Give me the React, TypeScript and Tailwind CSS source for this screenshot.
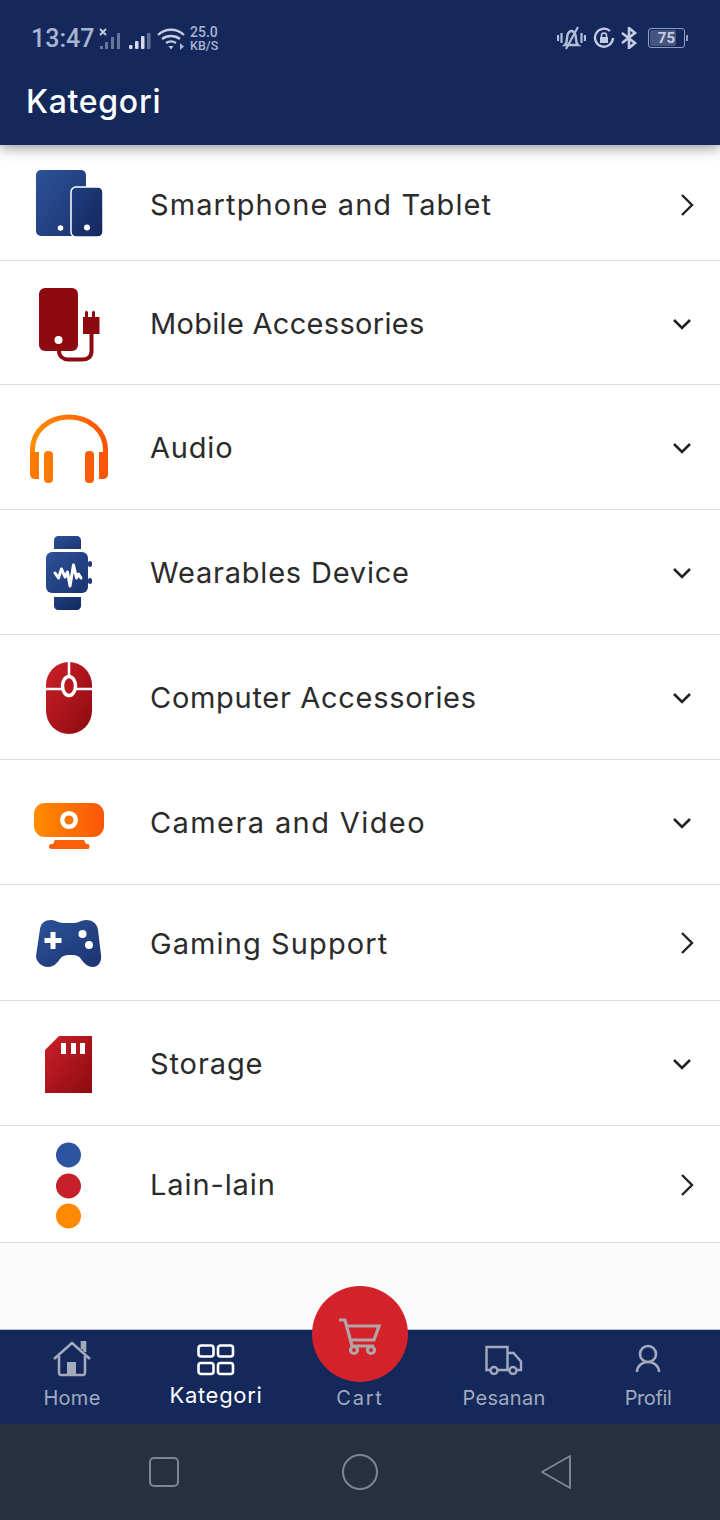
import type { ReactNode } from 'react';

const FONT = "font-['Inter','Open_Sans',sans-serif]";

type Row = {
  title: string;
  top: number;
  height: number;
  chevron: 'right' | 'down';
  tracking: string;
  icon: ReactNode;
};

const rows: Row[] = [
  {
    title: 'Smartphone and Tablet',
    top: 148,
    height: 112,
    chevron: 'right',
    tracking: 'tracking-[1.1px]',
    icon: (
      <>
        <rect x="36" y="170" width="50" height="66" rx="5" fill="url(#blue)" />
        <rect x="71" y="187" width="32" height="50" rx="5" fill="url(#blue2)" stroke="#fff" strokeWidth="1.5" />
        <circle cx="60.5" cy="228" r="2.8" fill="#fff" />
        <circle cx="87" cy="227.5" r="3" fill="#fff" />
      </>
    ),
  },
  {
    title: 'Mobile Accessories',
    top: 261,
    height: 123,
    chevron: 'down',
    tracking: 'tracking-[0.3px]',
    icon: (
      <>
        <rect x="39" y="288" width="39" height="63" rx="6" fill="#8c0a10" />
        <circle cx="58.5" cy="340" r="4" fill="#fff" />
        <path d="M59 351c0 5 4 8.500 9 8.500h14c6 0 9.500-3 9.500-8V334" fill="none" stroke="#8c0a10" strokeWidth="4" />
        <path d="M83 317h2v-5l1.500-1.500 1.500 1.500v5h4v-5l1.500-1.500 1.500 1.500v5h4.500v17H83z" fill="#8c0a10" />
      </>
    ),
  },
  {
    title: 'Audio',
    top: 385,
    height: 124,
    chevron: 'down',
    tracking: 'tracking-[0.8px]',
    icon: (
      <>
        <path d="M32.500 456v-6c0-19 16-33 36.500-33s36.500 14 36.500 33v6" fill="none" stroke="url(#orange)" strokeWidth="5" />
        <path d="M30 452h9v27h-4c-3 0-5-2-5-5z" fill="#ff7a05" />
        <rect x="44" y="451" width="9" height="32" rx="4" fill="#ff7a05" />
        <rect x="85" y="451" width="9" height="32" rx="4" fill="#fb5c08" />
        <path d="M99 452h9v22c0 3-2 5-5 5h-4z" fill="#fb5508" />
      </>
    ),
  },
  {
    title: 'Wearables Device',
    top: 510,
    height: 124,
    chevron: 'down',
    tracking: 'tracking-[0.8px]',
    icon: (
      <>
        <path d="M54 549v-9c0-2 2-4 4-4h19c2 0 4 2 4 4v9z" fill="url(#blue)" />
        <rect x="46" y="552" width="42" height="41" rx="6" fill="url(#blue)" />
        <path d="M54 597h27v9c0 2-2 4-4 4H58c-2 0-4-2-4-4z" fill="url(#blue2)" />
        <rect x="88" y="561" width="4" height="6" rx="2" fill="#1e3a78" />
        <rect x="88" y="578" width="4" height="6" rx="2" fill="#1e3a78" />
        <path d="M55 573l3.500 5 3-9 3.500 8 2.500-5 2.500 14 3.500-21 3 13 2-4 2.500 4" fill="none" stroke="#fff" strokeWidth="3" strokeLinejoin="round" strokeLinecap="round" />
      </>
    ),
  },
  {
    title: 'Computer Accessories',
    top: 635,
    height: 124,
    chevron: 'down',
    tracking: 'tracking-[0.7px]',
    icon: (
      <>
        <rect x="46" y="662" width="46" height="72" rx="23" fill="url(#red)" />
        <path d="M46 689h46M69 662v14" stroke="#fff" strokeWidth="2.500" />
        <ellipse cx="69" cy="686" rx="6.500" ry="9.500" fill="#b9151f" stroke="#fff" strokeWidth="3.500" />
      </>
    ),
  },
  {
    title: 'Camera and Video',
    top: 760,
    height: 124,
    chevron: 'down',
    tracking: 'tracking-[1.4px]',
    icon: (
      <>
        <rect x="34" y="803" width="70" height="34" rx="11" fill="url(#orange)" />
        <circle cx="69" cy="820" r="6.800" fill="#f97508" stroke="#fff" strokeWidth="4.500" />
        <path d="M55 840h29l2 4h2c1 0 1.500 1 1.500 2.500S89 849 88 849H51c-1 0-2-1-2-2.500s1-2.500 2-2.500h2z" fill="#f85f08" />
      </>
    ),
  },
  {
    title: 'Gaming Support',
    top: 885,
    height: 115,
    chevron: 'right',
    tracking: 'tracking-[1.1px]',
    icon: (
      <>
        <path d="M51 920c5 0 7 3 12 3h11c5 0 7-3 12-3 6 0 11 3 12 10l3 25c1 7-3 12-8 12-6 0-9-4-12-8-2-3-5-4-8-4H69c-4 0-7 1-9 4-3 4-6 8-12 8-6 0-12-5-12-11l4-27c1-6 5-9 11-9z" fill="url(#blue)" />
        <path d="M50.500 932h5v6h6v5h-6v6h-5v-6h-6v-5h6z" fill="#fff" />
        <circle cx="82.500" cy="934" r="4" fill="#fff" />
        <circle cx="89" cy="945" r="4" fill="#fff" />
      </>
    ),
  },
  {
    title: 'Storage',
    top: 1001,
    height: 124,
    chevron: 'down',
    tracking: 'tracking-[0.9px]',
    icon: (
      <>
        <path d="M59 1036h33v57H45v-43z" fill="url(#red)" />
        <path d="M61 1043h5v11h-5zM71 1043h5v11h-5zM80 1043h5v11h-5z" fill="#fff" />
      </>
    ),
  },
  {
    title: 'Lain-lain',
    top: 1126,
    height: 116,
    chevron: 'right',
    tracking: 'tracking-[0.9px]',
    icon: (
      <>
        <circle cx="68.500" cy="1155" r="12.500" fill="#2c549f" />
        <circle cx="68.500" cy="1186" r="12.500" fill="#c6202b" />
        <circle cx="68.500" cy="1216" r="12.500" fill="#ff8a00" />
      </>
    ),
  },
];

function Gradients() {
  return (
    <svg width="0" height="0" className="absolute">
      <defs>
        <linearGradient id="blue" x1="0" y1="0" x2="1" y2="1">
          <stop offset="0" stopColor="#2c5299" />
          <stop offset="1" stopColor="#1c3470" />
        </linearGradient>
        <linearGradient id="blue2" x1="0" y1="0" x2="1" y2="1">
          <stop offset="0" stopColor="#1f3d7f" />
          <stop offset="1" stopColor="#14285c" />
        </linearGradient>
        <linearGradient id="red" x1="0" y1="0" x2="1" y2="1">
          <stop offset="0" stopColor="#cc2029" />
          <stop offset="1" stopColor="#8c0a10" />
        </linearGradient>
        <linearGradient id="orange" x1="0" y1="0" x2="1" y2="0">
          <stop offset="0" stopColor="#ff8c00" />
          <stop offset="1" stopColor="#fb5508" />
        </linearGradient>
      </defs>
    </svg>
  );
}

function Chevron({ dir }: { dir: 'right' | 'down' }) {
  if (dir === 'right') {
    return (
      <svg width="16" height="24" viewBox="0 0 16 24" fill="none" stroke="#222" strokeWidth="2.400" className="mr-[25px] mt-[1px]">
        <path d="M3 2l10 10-10 10" />
      </svg>
    );
  }
  return (
    <svg width="20" height="14" viewBox="0 0 20 14" fill="none" stroke="#222" strokeWidth="2.600" className="mr-[28px] mt-[2px]">
      <path d="M2 3l8 8 8-8" />
    </svg>
  );
}

function StatusBar() {
  return (
    <div className="flex h-[65px] items-end justify-between pl-[31px] pr-[32px] pb-[11px] font-['Roboto',sans-serif] text-[#a9b4d0]">
      <div className="flex items-center">
        <span className="w-[61px] text-[25px] leading-[30px] font-medium">13:47</span>
        <svg width="56" height="24" viewBox="0 0 56 24" className="ml-[7px]" fill="#a9b4d0">
          <path d="M1 2l6 6M7 2L1 8" stroke="#c5cde2" strokeWidth="1.800" />
          <g opacity="0.55">
            <rect x="1" y="19" width="3" height="3" />
            <rect x="6" y="15" width="3" height="7" />
            <rect x="12" y="10" width="3" height="12" />
            <rect x="18" y="6" width="3" height="16" />
          </g>
          <rect x="30" y="18" width="3.500" height="4" rx="1" fill="#d5dbea" />
          <rect x="36" y="14" width="3.500" height="8" rx="1" fill="#d5dbea" />
          <rect x="42" y="9" width="3.500" height="13" rx="1" fill="#d5dbea" />
          <rect x="48" y="6" width="3.500" height="16" opacity="0.5" />
        </svg>
        <svg width="30" height="24" viewBox="0 0 30 24" className="ml-[2px]" fill="none" stroke="#c5cde2" strokeWidth="2.300">
          <path d="M1 8c7-7 19-7 26 0M5 12c5-4 13-4 18 0M9 16c3-2 7-2 10 0" />
          <path d="M11.500 19h5L14 22.500z" fill="#c5cde2" stroke="none" />
          <path d="M23 16v7l4-3.500z" fill="#a9b4d0" stroke="none" />
        </svg>
        <div className="ml-[3px] flex flex-col text-[14px] leading-[13px] font-medium">
          <span>25.0</span>
          <span className="text-[12.500px]">KB/S</span>
        </div>
      </div>
      <div className="flex items-center pb-[4px]">
        <svg width="29" height="24" viewBox="0 0 29 24" fill="none" stroke="#b4bed6" strokeWidth="2.200">
          <path d="M1 9v6M4.500 7v10M24.500 7v10M28 9v6" />
          <path d="M8 19c2.500-2 1.500-6 2.500-10 1-3 2.500-4 4-4s3 1 4 4c1 4 0 8 2.500 10z" strokeWidth="2.400" />
          <path d="M9 23L21 1" />
        </svg>
        <svg width="22" height="22" viewBox="0 0 22 22" fill="none" className="ml-[7px]" stroke="#c5cde2" strokeWidth="2.300">
          <path d="M20 11a9 9 0 1 1-3-7" />
          <rect x="7" y="10" width="8" height="6" fill="#c5cde2" stroke="none" />
          <path d="M8.500 10V8.500a2.500 2.500 0 0 1 5 0V10" strokeWidth="1.500" />
        </svg>
        <svg width="18" height="22" viewBox="0 0 18 22" fill="none" className="ml-[5px]" stroke="#c5cde2" strokeWidth="2.600">
          <path d="M2 6l13 10-6 5V1l6 5L2 16" />
        </svg>
        <div className="ml-[10px] flex h-[20px] w-[37px] items-center rounded-[3px] border border-[#8f9cc0] p-[1px]">
          <span className="flex h-full w-[26px] items-center justify-end rounded-[2px] bg-[#46557f] pr-[1px] text-[15px] leading-none font-bold text-[#c5cde2]">
            75
          </span>
        </div>
        <div className="ml-[1px] h-[6px] w-[2px] bg-[#8f9cc0]" />
      </div>
    </div>
  );
}

function NavItem({ label, active, icon, tracking = 'tracking-[0.3px]' }: { label: string; active?: boolean; icon?: ReactNode; tracking?: string }) {
  return (
    <div className={`flex flex-col items-center ${active ? 'text-white' : 'text-[#a3aabb]'}`}>
      <div className="flex h-[48px] items-end">{icon}</div>
      {active ? (
        <span className="mt-[3px] text-[22px] leading-[28px] tracking-[0.7px]">{label}</span>
      ) : (
        <span className={`mt-[6px] text-[20px] leading-[28px] ${tracking}`}>{label}</span>
      )}
    </div>
  );
}

export default function App() {
  return (
    <div className={`flex h-[1520px] w-[720px] flex-col overflow-hidden bg-[#fafafa] ${FONT}`}>
      <Gradients />
      <header className="relative z-10 h-[145px] bg-[#14285c] shadow-[0_4px_12px_rgba(0,0,0,0.35)]">
        <StatusBar />
        <h1 className="pl-[26px] pt-[16px] text-[32px] leading-[42px] font-medium tracking-[0.7px] text-white">Kategori</h1>
      </header>

      <main className="flex-1 pt-[3px]">
        {rows.map((row) => (
          <div key={row.title} className="box-content flex items-center border-b border-[#dedede] bg-white" style={{ height: row.height }}>
            <svg width="137" height={row.height} viewBox={`0 ${row.top} 137 ${row.height}`} className="shrink-0">
              {row.icon}
            </svg>
            <span className={`ml-[13px] flex-1 pt-[1px] text-[29px] leading-none text-[#2b2b2b] ${row.tracking}`}>{row.title}</span>
            <Chevron dir={row.chevron} />
          </div>
        ))}
      </main>

      <nav className="relative grid h-[95px] grid-cols-5 border-t border-[#b7bfd6] bg-[#14285c]">
        <NavItem
          label="Home"
          icon={
            <svg width="40" height="36" viewBox="0 0 40 36" fill="none" stroke="#a3aabb" strokeWidth="2.600" className="mb-[1px]">
              <path d="M2 18L20 2l18 16" />
              <path d="M7 15v17c0 1 1 2 2 2h22c1 0 2-1 2-2V15" />
              <path d="M30 8V1h3v10" fill="#a3aabb" />
              <rect x="15" y="21" width="9" height="13" fill="#a3aabb" stroke="none" />
            </svg>
          }
        />
        <NavItem
          label="Kategori"
          active
          icon={
            <svg width="38" height="32" viewBox="0 0 38 32" fill="none" stroke="#fff" strokeWidth="2.600" className="mb-[2px]">
              <rect x="1.500" y="1.500" width="15" height="11" rx="2.500" />
              <rect x="21" y="1.500" width="15" height="11" rx="2.500" />
              <rect x="1.500" y="19" width="15" height="11" rx="2.500" />
              <rect x="21" y="19" width="15" height="11" rx="2.500" />
            </svg>
          }
        />
        <NavItem label="Cart" tracking="tracking-[1.8px]" />
        <NavItem
          label="Pesanan"
          icon={
            <svg width="38" height="30" viewBox="0 0 38 30" fill="none" stroke="#a3aabb" strokeWidth="2.400" className="mb-[3px]">
              <path d="M6 25H1.500V2h21v23H12" />
              <path d="M22.500 8h6l7.500 8.500V25h-4M22.500 25H25" />
              <circle cx="9" cy="25.500" r="3.500" />
              <circle cx="28" cy="25.500" r="3.500" />
            </svg>
          }
        />
        <NavItem
          label="Profil"
          tracking="tracking-[-0.4px]"
          icon={
            <svg width="26" height="30" viewBox="0 0 26 30" fill="none" stroke="#a3aabb" strokeWidth="2.600" className="mb-[4px]">
              <circle cx="13" cy="10" r="8" />
              <path d="M2 28c0-6 5-10 11-10s11 4 11 10" />
            </svg>
          }
        />
        <div className="absolute left-[312px] top-[-44px] flex h-[96px] w-[96px] items-center justify-center rounded-full bg-[#d3222a] pt-[6px]">
          <svg width="44" height="38" viewBox="0 0 44 38" fill="none" stroke="#b3a4a8" strokeWidth="3.200">
            <path d="M1 2h6l7 26h22" />
            <path d="M9 8h32l-5 14H13" />
            <circle cx="16" cy="32" r="3.500" />
            <circle cx="33" cy="32" r="3.500" />
          </svg>
        </div>
      </nav>

      <div className="flex h-[96px] items-center bg-[#27303f]">
        <div className="grid w-full grid-cols-3 items-center px-[66px]">
          <div className="flex justify-center">
            <div className="h-[30px] w-[30px] rounded-[5px] border-2 border-[#7d8592]" />
          </div>
          <div className="flex justify-center">
            <div className="h-[36px] w-[36px] rounded-full border-2 border-[#7d8592]" />
          </div>
          <div className="flex justify-center">
            <svg width="32" height="36" viewBox="0 0 32 36" fill="none" stroke="#7d8592" strokeWidth="2" strokeLinejoin="round">
              <path d="M30 2v32L2 18z" />
            </svg>
          </div>
        </div>
      </div>
    </div>
  );
}
